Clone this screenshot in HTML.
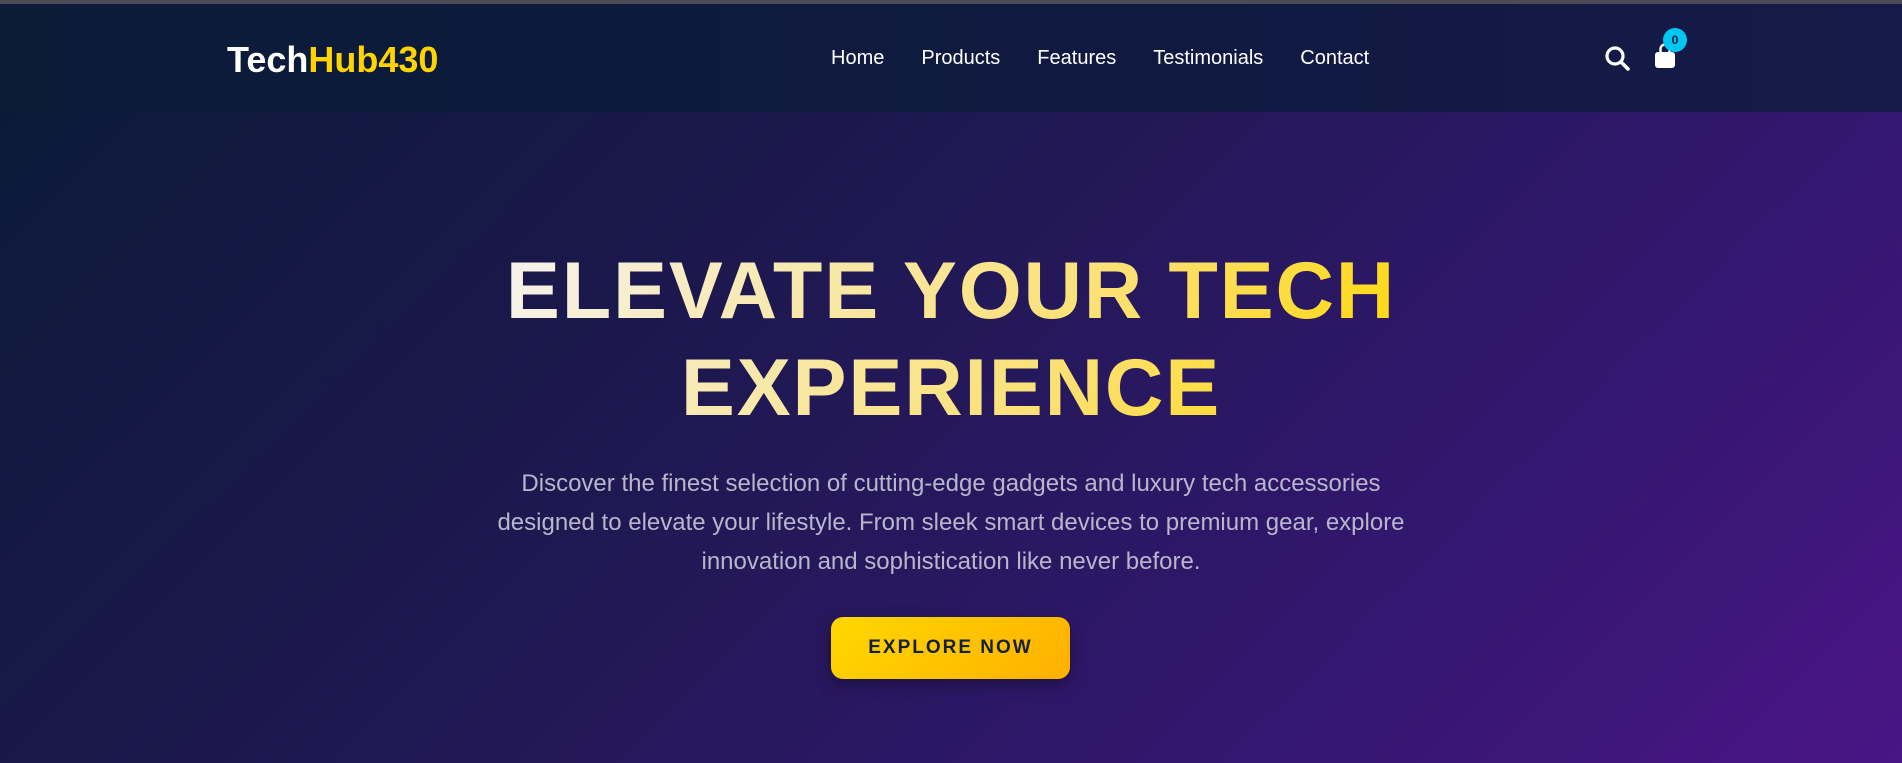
<!DOCTYPE html>
<html><head><meta charset="utf-8"><style>
*{margin:0;padding:0;box-sizing:border-box}
body{width:1902px;height:763px;overflow:hidden;font-family:"Liberation Sans",Arial,sans-serif;background:linear-gradient(135deg,#0a1a36 0%,#1e1850 40%,#331770 75%,#4a1585 100%);position:relative}
.strip{position:absolute;left:0;top:0;width:1902px;height:4px;background:#4b4b55}
header{position:absolute;left:0;top:4px;width:1902px;height:108px;background:linear-gradient(90deg,#0b1b38,#111a42 70%,#161a48)}
.logo{position:absolute;left:227px;top:34px;font-size:36px;font-weight:bold;color:#fff;line-height:44px}
.logo span{color:#ffd400}
nav{position:absolute;left:831px;top:42px;font-size:20px;color:#fff;line-height:24px;white-space:nowrap}
nav a{margin-right:37px}
.badge{position:absolute;left:1663px;top:24px;width:24px;height:24px;border-radius:50%;background:#00c6f2;color:#0b1a38;font-size:12px;font-weight:bold;text-align:center;line-height:24px}
.hw{position:absolute;left:0;top:243px;width:1902px;text-align:center}
h1{display:inline-block;font-size:81px;line-height:97px;font-weight:bold;letter-spacing:1.8px;background:linear-gradient(120deg,#f6f3ee 0%,#f8e9b0 30%,#fbe070 65%,#ffd700 100%);-webkit-background-clip:text;background-clip:text;color:transparent}
p{position:absolute;left:0;top:464px;width:1902px;text-align:center;font-size:24px;line-height:39px;color:#b9b6cc;white-space:nowrap}
.btn{position:absolute;left:831px;top:617px;width:239px;height:62px;border-radius:12px;background:linear-gradient(135deg,#ffd800,#ffb000);color:#14203a;font-weight:bold;font-size:19px;letter-spacing:2px;text-align:center;line-height:62px;box-shadow:0 6px 16px rgba(0,0,0,.3)}
</style></head><body>
<div class="strip"></div>
<header>
<div class="logo">Tech<span>Hub430</span></div>
<nav><a>Home</a><a>Products</a><a>Features</a><a>Testimonials</a><a style="margin:0">Contact</a></nav>
<svg style="position:absolute;left:1604px;top:41px" width="28" height="28" viewBox="0 0 28 28"><circle cx="11" cy="11" r="8" fill="none" stroke="#fff" stroke-width="3.2"/><line x1="17" y1="17" x2="24" y2="24" stroke="#fff" stroke-width="3.6" stroke-linecap="round"/></svg>
<svg style="position:absolute;left:1653px;top:38px" width="24" height="28" viewBox="0 0 24 28"><path d="M7.5 11 V7 a4.5 4.5 0 0 1 9 0 V11" fill="none" stroke="#fff" stroke-width="2.4"/><rect x="2" y="10" width="20" height="16" rx="3" fill="#fff"/></svg>
<div class="badge">0</div>
</header>
<div class="hw"><h1>ELEVATE YOUR TECH<br>EXPERIENCE</h1></div>
<p>Discover the finest selection of cutting-edge gadgets and luxury tech accessories<br>designed to elevate your lifestyle. From sleek smart devices to premium gear, explore<br>innovation and sophistication like never before.</p>
<div class="btn">EXPLORE NOW</div>
</body></html>
